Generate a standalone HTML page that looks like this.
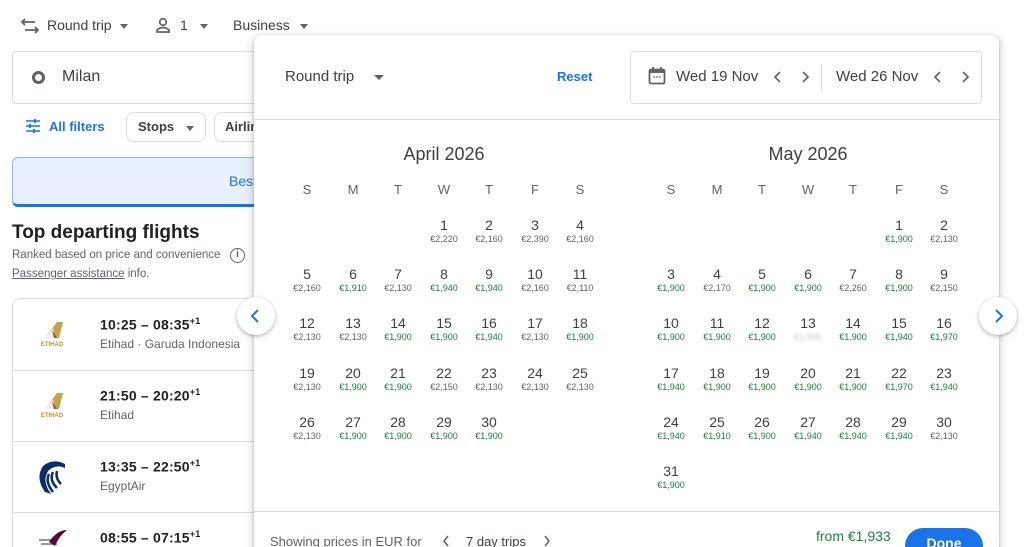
<!DOCTYPE html>
<html><head><meta charset="utf-8"><style>
*{margin:0;padding:0;box-sizing:border-box}
html,body{width:1024px;height:547px;overflow:hidden}
body{background:#fff;font-family:"Liberation Sans",Arial,sans-serif;color:#3c4043;position:relative}
.a{position:absolute}
.c{position:absolute;width:46px;text-align:center}
.c b{display:block;font-weight:400;font-size:14px;line-height:18px;color:#3c4043}
.c i{display:block;font-style:normal;font-size:9px;line-height:11px;color:#5f6368}
.c i.g{color:#188038}
.wd{position:absolute;width:46px;text-align:center;font-size:13px;color:#5f6368;top:182px}
.sep{position:absolute;left:12px;width:250px;height:1px;background:#dadce0}
.t{font-size:14px;color:#202124;font-weight:700;letter-spacing:.2px}
.t sup{font-size:9px}
.al{font-size:12px;color:#5f6368}
</style></head><body>

<!-- top bar -->
<svg class="a" style="left:20px;top:17px" width="20" height="18" viewBox="0 0 20 18"><path d="M5 2 L2 5 L5 8 M2 5 H15 M15 10 L18 13 L15 16 M18 13 H5" stroke="#5f6368" stroke-width="1.8" fill="none"/></svg>
<div class="a" style="left:47px;top:17px;font-size:14px;color:#3c4043">Round trip</div>
<div class="a" style="left:120px;top:24px;border:4px solid transparent;border-top:5px solid #5f6368"></div>
<svg class="a" style="left:155px;top:17px" width="16" height="18" viewBox="0 0 16 18"><circle cx="8" cy="5" r="3.3" stroke="#5f6368" stroke-width="1.7" fill="none"/><path d="M2 15 V13 Q8 8 14 13 V15 Z" stroke="#5f6368" stroke-width="1.7" fill="none"/></svg>
<div class="a" style="left:180px;top:17px;font-size:14px">1</div>
<div class="a" style="left:200px;top:24px;border:4px solid transparent;border-top:5px solid #5f6368"></div>
<div class="a" style="left:233px;top:17px;font-size:14px">Business</div>
<div class="a" style="left:300px;top:24px;border:4px solid transparent;border-top:5px solid #5f6368"></div>

<!-- search box -->
<div class="a" style="left:12px;top:51px;width:260px;height:53px;border:1px solid #dadce0;border-radius:4px"></div>
<div class="a" style="left:32px;top:71px;width:13px;height:13px;border:3px solid #5f6368;border-radius:50%"></div>
<div class="a" style="left:62px;top:68px;font-size:16px;color:#3c4043">Milan</div>

<!-- filters -->
<svg class="a" style="left:25px;top:119px" width="16" height="14" viewBox="0 0 16 14"><path d="M1 2H15M1 7H15M1 12H15" stroke="#1a73e8" stroke-width="1.6"/><path d="M10 0V4M5 5V9M9 10V14" stroke="#1a73e8" stroke-width="1.8"/></svg>
<div class="a" style="left:49px;top:119px;font-size:13px;color:#1a73e8;font-weight:700">All filters</div>
<div class="a" style="left:126px;top:112px;width:80px;height:30px;border:1px solid #dadce0;border-radius:8px"></div>
<div class="a" style="left:138px;top:119px;font-size:13px;color:#3c4043;font-weight:700">Stops</div>
<div class="a" style="left:186px;top:126px;border:4px solid transparent;border-top:5px solid #5f6368"></div>
<div class="a" style="left:214px;top:112px;width:60px;height:30px;border:1px solid #dadce0;border-radius:8px"></div>
<div class="a" style="left:225px;top:119px;font-size:13px;color:#3c4043;font-weight:700">Airlines</div>

<!-- best tab -->
<div class="a" style="left:12px;top:157px;width:260px;height:50px;background:#e8f0fe;border:1px solid #8ab4f8;border-bottom:3px solid #1a73e8;border-radius:6px"></div>
<div class="a" style="left:229px;top:173px;font-size:14px;color:#1a73e8">Best</div>

<div class="a" style="left:12px;top:222px;font-size:19px;color:#202124;font-weight:700">Top departing flights</div>
<div class="a" style="left:12px;top:249px;font-size:11.5px;color:#5f6368">Ranked based on price and convenience</div>
<div class="a" style="left:230px;top:248px;width:15px;height:15px;border:1.5px solid #5f6368;border-radius:50%;font-size:10px;text-align:center;line-height:12px;color:#5f6368;font-weight:700">i</div>
<div class="a" style="left:12px;top:268px;font-size:11.5px;color:#5f6368"><span style="text-decoration:underline">Passenger assistance</span> info.</div>

<!-- flight list -->
<div class="a" style="left:12px;top:298px;width:260px;height:260px;border:1px solid #dadce0;border-radius:8px"></div>
<div class="sep" style="top:370px"></div>
<div class="sep" style="top:441px"></div>
<div class="sep" style="top:512px"></div>

<svg class="a" style="left:35px;top:320px" width="35" height="30" viewBox="0 0 35 30"><path d="M10 18 L22 2 H28 L24 18 Z" fill="#c9a24a"/><path d="M10 18 L18 8 L20 18Z" fill="#eee" /><path d="M17 10 L22 18 L19 18Z" fill="#8b5a2b"/><text x="17" y="26" font-size="6" fill="#c8902a" text-anchor="middle" font-family="Liberation Sans" font-weight="700">ETIHAD</text></svg>
<svg class="a" style="left:35px;top:391px" width="35" height="30" viewBox="0 0 35 30"><path d="M10 18 L22 2 H28 L24 18 Z" fill="#c9a24a"/><path d="M10 18 L18 8 L20 18Z" fill="#eee" /><path d="M17 10 L22 18 L19 18Z" fill="#8b5a2b"/><text x="17" y="26" font-size="6" fill="#c8902a" text-anchor="middle" font-family="Liberation Sans" font-weight="700">ETIHAD</text></svg>
<svg class="a" style="left:35px;top:456px" width="35" height="45" viewBox="0 0 35 45"><path d="M30 8 Q18 2 8 10 Q0 22 10 36 L16 38 Q6 24 14 14 Q22 8 30 12 Z" fill="#0b2c6b"/><path d="M14 18 Q10 26 18 36 M18 16 Q14 24 22 32 M22 15 Q20 22 26 28" stroke="#0b2c6b" stroke-width="2.5" fill="none"/></svg>
<svg class="a" style="left:35px;top:528px" width="35" height="19" viewBox="0 0 35 19"><path d="M4 12H20M6 16H22" stroke="#999" stroke-width="2"/><path d="M14 14 Q22 2 32 2 Q24 8 20 18Z" fill="#5c0632"/></svg>

<div class="a t" style="left:100px;top:316px">10:25 – 08:35<sup>+1</sup></div>
<div class="a al" style="left:100px;top:337px">Etihad · Garuda Indonesia</div>
<div class="a t" style="left:100px;top:387px">21:50 – 20:20<sup>+1</sup></div>
<div class="a al" style="left:100px;top:408px">Etihad</div>
<div class="a t" style="left:100px;top:458px">13:35 – 22:50<sup>+1</sup></div>
<div class="a al" style="left:100px;top:479px">EgyptAir</div>
<div class="a t" style="left:100px;top:529px">08:55 – 07:15<sup>+1</sup></div>

<!-- dialog -->
<div class="a" style="left:254px;top:35px;width:745px;height:530px;background:#fff;border-radius:8px;box-shadow:0 1px 3px rgba(60,64,67,.3),0 4px 8px 3px rgba(60,64,67,.15)"></div>
<div class="a" style="left:285px;top:68px;font-size:15px;color:#3c4043">Round trip</div>
<div class="a" style="left:374px;top:75px;border:5px solid transparent;border-top:5px solid #5f6368"></div>
<div class="a" style="left:557px;top:69px;font-size:13px;color:#1a73e8;font-weight:700">Reset</div>
<div class="a" style="left:630px;top:51px;width:352px;height:53px;border:1px solid #dadce0;border-radius:4px"></div>
<svg class="a" style="left:648px;top:66px" width="18" height="20" viewBox="0 0 18 20"><rect x="1.5" y="3.5" width="15" height="14" rx="1.5" stroke="#5f6368" stroke-width="1.8" fill="none"/><rect x="1.5" y="3.5" width="15" height="3.5" fill="#5f6368"/><path d="M5 1V4M13 1V4" stroke="#5f6368" stroke-width="1.8"/><circle cx="6" cy="11" r="0.9" fill="#5f6368"/><circle cx="9" cy="11" r="0.9" fill="#5f6368"/><circle cx="12" cy="11" r="0.9" fill="#5f6368"/></svg>
<div class="a" style="left:676px;top:68px;font-size:15px;color:#3c4043">Wed 19 Nov</div>
<svg class="a" style="left:770px;top:69px" width="50" height="16" viewBox="0 0 50 16"><path d="M10 3L5 8L10 13M33 3L38 8L33 13" stroke="#5f6368" stroke-width="1.6" fill="none"/></svg>
<div class="a" style="left:821px;top:64px;width:1px;height:28px;background:#dadce0"></div>
<div class="a" style="left:836px;top:68px;font-size:15px;color:#3c4043">Wed 26 Nov</div>
<svg class="a" style="left:930px;top:69px" width="50" height="16" viewBox="0 0 50 16"><path d="M10 3L5 8L10 13M33 3L38 8L33 13" stroke="#5f6368" stroke-width="1.6" fill="none"/></svg>
<div class="a" style="left:254px;top:119px;width:745px;height:1px;background:#dadce0"></div>

<div class="a" style="left:344px;top:144px;width:200px;text-align:center;font-size:18px;color:#3c4043">April 2026</div>
<div class="a" style="left:708px;top:144px;width:200px;text-align:center;font-size:18px;color:#3c4043">May 2026</div>

<div class="wd" style="left:284px">S</div><div class="wd" style="left:330px">M</div><div class="wd" style="left:375px">T</div><div class="wd" style="left:421px">W</div><div class="wd" style="left:466px">T</div><div class="wd" style="left:512px">F</div><div class="wd" style="left:557px">S</div>
<div class="wd" style="left:648px">S</div><div class="wd" style="left:694px">M</div><div class="wd" style="left:739px">T</div><div class="wd" style="left:785px">W</div><div class="wd" style="left:830px">T</div><div class="wd" style="left:876px">F</div><div class="wd" style="left:921px">S</div>

<!-- April -->
<div class="c" style="left:421px;top:216px"><b>1</b><i>€2,220</i></div>
<div class="c" style="left:466px;top:216px"><b>2</b><i>€2,160</i></div>
<div class="c" style="left:512px;top:216px"><b>3</b><i>€2,390</i></div>
<div class="c" style="left:557px;top:216px"><b>4</b><i>€2,160</i></div>

<div class="c" style="left:284px;top:265px"><b>5</b><i>€2,160</i></div>
<div class="c" style="left:330px;top:265px"><b>6</b><i class="g">€1,910</i></div>
<div class="c" style="left:375px;top:265px"><b>7</b><i>€2,130</i></div>
<div class="c" style="left:421px;top:265px"><b>8</b><i class="g">€1,940</i></div>
<div class="c" style="left:466px;top:265px"><b>9</b><i class="g">€1,940</i></div>
<div class="c" style="left:512px;top:265px"><b>10</b><i>€2,160</i></div>
<div class="c" style="left:557px;top:265px"><b>11</b><i>€2,110</i></div>

<div class="c" style="left:284px;top:314px"><b>12</b><i>€2,130</i></div>
<div class="c" style="left:330px;top:314px"><b>13</b><i>€2,130</i></div>
<div class="c" style="left:375px;top:314px"><b>14</b><i class="g">€1,900</i></div>
<div class="c" style="left:421px;top:314px"><b>15</b><i class="g">€1,900</i></div>
<div class="c" style="left:466px;top:314px"><b>16</b><i class="g">€1,940</i></div>
<div class="c" style="left:512px;top:314px"><b>17</b><i>€2,130</i></div>
<div class="c" style="left:557px;top:314px"><b>18</b><i class="g">€1,900</i></div>

<div class="c" style="left:284px;top:364px"><b>19</b><i>€2,130</i></div>
<div class="c" style="left:330px;top:364px"><b>20</b><i class="g">€1,900</i></div>
<div class="c" style="left:375px;top:364px"><b>21</b><i class="g">€1,900</i></div>
<div class="c" style="left:421px;top:364px"><b>22</b><i>€2,150</i></div>
<div class="c" style="left:466px;top:364px"><b>23</b><i>€2,130</i></div>
<div class="c" style="left:512px;top:364px"><b>24</b><i>€2,130</i></div>
<div class="c" style="left:557px;top:364px"><b>25</b><i>€2,130</i></div>

<div class="c" style="left:284px;top:413px"><b>26</b><i>€2,130</i></div>
<div class="c" style="left:330px;top:413px"><b>27</b><i class="g">€1,900</i></div>
<div class="c" style="left:375px;top:413px"><b>28</b><i class="g">€1,900</i></div>
<div class="c" style="left:421px;top:413px"><b>29</b><i class="g">€1,900</i></div>
<div class="c" style="left:466px;top:413px"><b>30</b><i class="g">€1,900</i></div>

<!-- May -->
<div class="c" style="left:876px;top:216px"><b>1</b><i class="g">€1,900</i></div>
<div class="c" style="left:921px;top:216px"><b>2</b><i>€2,130</i></div>

<div class="c" style="left:648px;top:265px"><b>3</b><i class="g">€1,900</i></div>
<div class="c" style="left:694px;top:265px"><b>4</b><i>€2,170</i></div>
<div class="c" style="left:739px;top:265px"><b>5</b><i class="g">€1,900</i></div>
<div class="c" style="left:785px;top:265px"><b>6</b><i class="g">€1,900</i></div>
<div class="c" style="left:830px;top:265px"><b>7</b><i>€2,260</i></div>
<div class="c" style="left:876px;top:265px"><b>8</b><i class="g">€1,900</i></div>
<div class="c" style="left:921px;top:265px"><b>9</b><i>€2,150</i></div>

<div class="c" style="left:648px;top:314px"><b>10</b><i class="g">€1,900</i></div>
<div class="c" style="left:694px;top:314px"><b>11</b><i class="g">€1,900</i></div>
<div class="c" style="left:739px;top:314px"><b>12</b><i class="g">€1,900</i></div>
<div class="c" style="left:785px;top:314px"><b>13</b><i style="color:#c8c8c8;filter:blur(1.2px)">€1,900</i></div>
<div class="c" style="left:830px;top:314px"><b>14</b><i class="g">€1,900</i></div>
<div class="c" style="left:876px;top:314px"><b>15</b><i class="g">€1,940</i></div>
<div class="c" style="left:921px;top:314px"><b>16</b><i class="g">€1,970</i></div>

<div class="c" style="left:648px;top:364px"><b>17</b><i class="g">€1,940</i></div>
<div class="c" style="left:694px;top:364px"><b>18</b><i class="g">€1,900</i></div>
<div class="c" style="left:739px;top:364px"><b>19</b><i class="g">€1,900</i></div>
<div class="c" style="left:785px;top:364px"><b>20</b><i class="g">€1,900</i></div>
<div class="c" style="left:830px;top:364px"><b>21</b><i class="g">€1,900</i></div>
<div class="c" style="left:876px;top:364px"><b>22</b><i class="g">€1,970</i></div>
<div class="c" style="left:921px;top:364px"><b>23</b><i class="g">€1,940</i></div>

<div class="c" style="left:648px;top:413px"><b>24</b><i class="g">€1,940</i></div>
<div class="c" style="left:694px;top:413px"><b>25</b><i class="g">€1,910</i></div>
<div class="c" style="left:739px;top:413px"><b>26</b><i class="g">€1,900</i></div>
<div class="c" style="left:785px;top:413px"><b>27</b><i class="g">€1,940</i></div>
<div class="c" style="left:830px;top:413px"><b>28</b><i class="g">€1,940</i></div>
<div class="c" style="left:876px;top:413px"><b>29</b><i class="g">€1,940</i></div>
<div class="c" style="left:921px;top:413px"><b>30</b><i>€2,130</i></div>

<div class="c" style="left:648px;top:462px"><b>31</b><i class="g">€1,900</i></div>

<!-- nav circles -->
<div class="a" style="left:237px;top:297px;width:38px;height:38px;border-radius:50%;background:#fff;box-shadow:0 1px 3px rgba(60,64,67,.3),0 2px 6px rgba(60,64,67,.15)"></div>
<svg class="a" style="left:247px;top:307px" width="18" height="18" viewBox="0 0 18 18"><path d="M11 3L5 9L11 15" stroke="#1a73e8" stroke-width="2" fill="none"/></svg>
<div class="a" style="left:979px;top:297px;width:38px;height:38px;border-radius:50%;background:#fff;box-shadow:0 1px 3px rgba(60,64,67,.3),0 2px 6px rgba(60,64,67,.15)"></div>
<svg class="a" style="left:989px;top:307px" width="18" height="18" viewBox="0 0 18 18"><path d="M7 3L13 9L7 15" stroke="#1a73e8" stroke-width="2" fill="none"/></svg>

<!-- footer -->
<div class="a" style="left:254px;top:511px;width:745px;height:1px;background:#dadce0"></div>
<div class="a" style="left:270px;top:534px;font-size:13px;color:#5f6368">Showing prices in EUR for</div>
<svg class="a" style="left:440px;top:533px" width="120" height="16" viewBox="0 0 120 16"><path d="M8 3L4 8L8 13M105 3L109 8L105 13" stroke="#5f6368" stroke-width="1.5" fill="none"/></svg>
<div class="a" style="left:466px;top:534px;font-size:13px;color:#3c4043">7 day trips</div>
<div class="a" style="left:816px;top:528px;font-size:14px;color:#188038">from €1,933</div>
<div class="a" style="left:905px;top:528px;width:78px;height:36px;border-radius:18px;background:#1a73e8;color:#fff;font-size:14px;font-weight:700;text-align:center;padding-top:7px">Done</div>

</body></html>
